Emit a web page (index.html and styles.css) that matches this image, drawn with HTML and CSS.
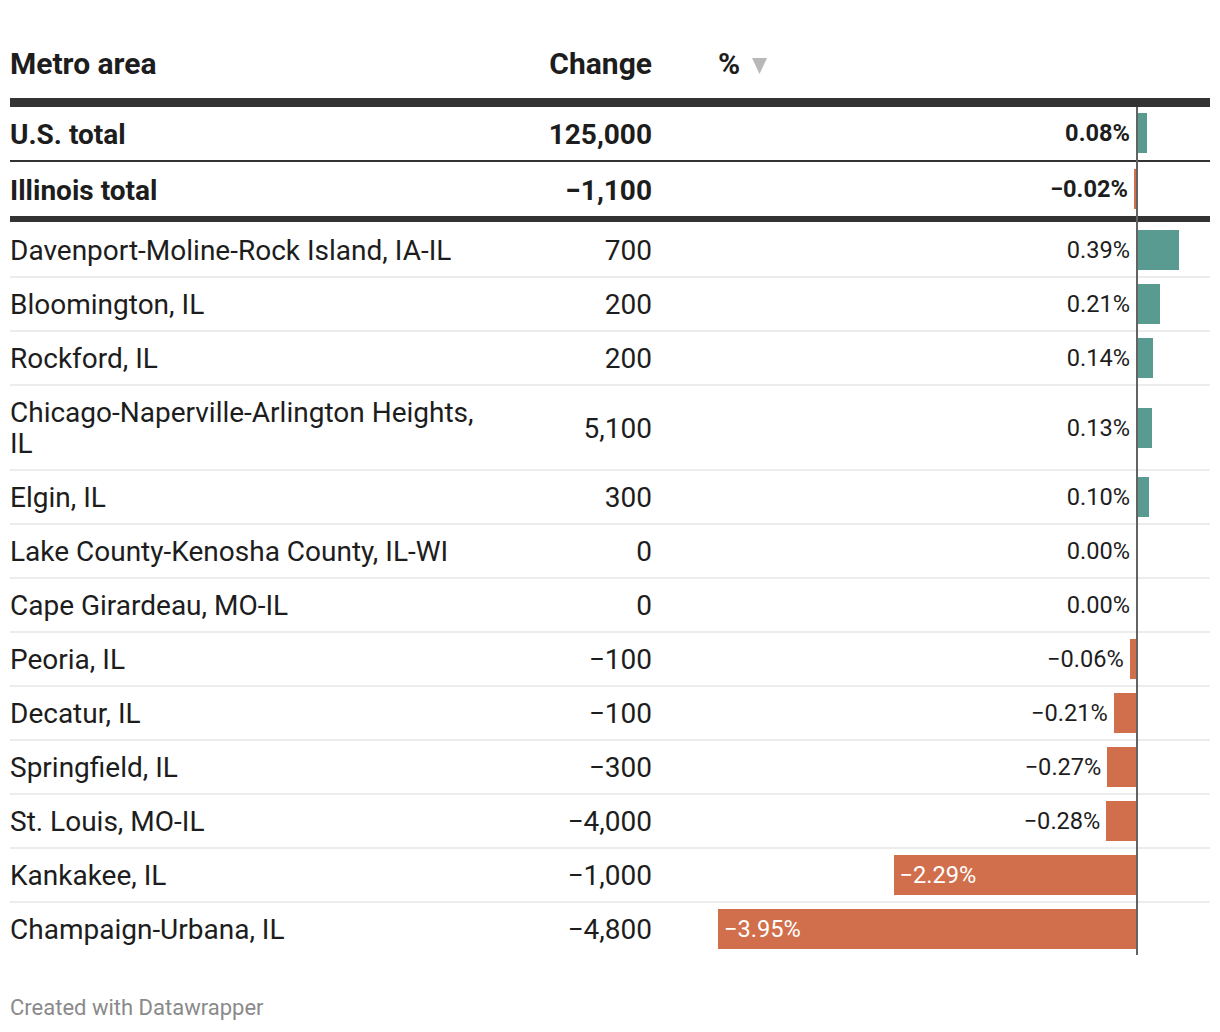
FILE: index.html
```html
<!DOCTYPE html>
<html lang="en">
<head>
<meta charset="utf-8">
<title>Metro area employment change</title>
<link rel="stylesheet" href="styles.css">
</head>
<body>
<div class="chart">
  <table class="tbl">
    <colgroup>
      <col class="col-name">
      <col class="col-num">
      <col class="col-bar">
    </colgroup>
    <thead>
      <tr>
        <th class="c-name">Metro area</th>
        <th class="c-num">Change</th>
        <th class="c-bar">%<svg class="sort" width="15" height="16" viewBox="0 0 15 16"><polygon points="0,0 15,0 7.5,16" fill="#b8b8b8"/></svg></th>
      </tr>
    </thead>
    <tbody>
      <tr class="us">
        <td class="c-name">U.S. total</td>
        <td class="c-num">125,000</td>
        <td class="c-bar"><div class="bars"><div class="neg"><span class="lbl">0.08%</span></div><div class="pos"><div class="bar up" style="width:8.5px"></div></div></div></td>
      </tr>
      <tr class="il">
        <td class="c-name">Illinois total</td>
        <td class="c-num">−1,100</td>
        <td class="c-bar"><div class="bars"><div class="neg"><span class="lbl">−0.02%</span><div class="bar down" style="width:2.1px"></div></div><div class="pos"></div></div></td>
      </tr>
      <tr class="first">
        <td class="c-name">Davenport-Moline-Rock Island, IA-IL</td>
        <td class="c-num">700</td>
        <td class="c-bar"><div class="bars"><div class="neg"><span class="lbl">0.39%</span></div><div class="pos"><div class="bar up" style="width:41.3px"></div></div></div></td>
      </tr>
      <tr>
        <td class="c-name">Bloomington, IL</td>
        <td class="c-num">200</td>
        <td class="c-bar"><div class="bars"><div class="neg"><span class="lbl">0.21%</span></div><div class="pos"><div class="bar up" style="width:22.2px"></div></div></div></td>
      </tr>
      <tr>
        <td class="c-name">Rockford, IL</td>
        <td class="c-num">200</td>
        <td class="c-bar"><div class="bars"><div class="neg"><span class="lbl">0.14%</span></div><div class="pos"><div class="bar up" style="width:14.8px"></div></div></div></td>
      </tr>
      <tr>
        <td class="c-name">Chicago-Naperville-Arlington Heights, IL</td>
        <td class="c-num">5,100</td>
        <td class="c-bar"><div class="bars"><div class="neg"><span class="lbl">0.13%</span></div><div class="pos"><div class="bar up" style="width:13.8px"></div></div></div></td>
      </tr>
      <tr>
        <td class="c-name">Elgin, IL</td>
        <td class="c-num">300</td>
        <td class="c-bar"><div class="bars"><div class="neg"><span class="lbl">0.10%</span></div><div class="pos"><div class="bar up" style="width:10.6px"></div></div></div></td>
      </tr>
      <tr>
        <td class="c-name">Lake County-Kenosha County, IL-WI</td>
        <td class="c-num">0</td>
        <td class="c-bar"><div class="bars"><div class="neg"><span class="lbl">0.00%</span></div><div class="pos"></div></div></td>
      </tr>
      <tr>
        <td class="c-name">Cape Girardeau, MO-IL</td>
        <td class="c-num">0</td>
        <td class="c-bar"><div class="bars"><div class="neg"><span class="lbl">0.00%</span></div><div class="pos"></div></div></td>
      </tr>
      <tr>
        <td class="c-name">Peoria, IL</td>
        <td class="c-num">−100</td>
        <td class="c-bar"><div class="bars"><div class="neg"><span class="lbl">−0.06%</span><div class="bar down" style="width:6.3px"></div></div><div class="pos"></div></div></td>
      </tr>
      <tr>
        <td class="c-name">Decatur, IL</td>
        <td class="c-num">−100</td>
        <td class="c-bar"><div class="bars"><div class="neg"><span class="lbl">−0.21%</span><div class="bar down" style="width:22.2px"></div></div><div class="pos"></div></div></td>
      </tr>
      <tr>
        <td class="c-name">Springfield, IL</td>
        <td class="c-num">−300</td>
        <td class="c-bar"><div class="bars"><div class="neg"><span class="lbl">−0.27%</span><div class="bar down" style="width:28.6px"></div></div><div class="pos"></div></div></td>
      </tr>
      <tr>
        <td class="c-name">St. Louis, MO-IL</td>
        <td class="c-num">−4,000</td>
        <td class="c-bar"><div class="bars"><div class="neg"><span class="lbl">−0.28%</span><div class="bar down" style="width:29.6px"></div></div><div class="pos"></div></div></td>
      </tr>
      <tr>
        <td class="c-name">Kankakee, IL</td>
        <td class="c-num">−1,000</td>
        <td class="c-bar"><div class="bars"><div class="neg"><div class="bar down inside" style="width:242.4px"><span class="lbl-in">−2.29%</span></div></div><div class="pos"></div></div></td>
      </tr>
      <tr>
        <td class="c-name">Champaign-Urbana, IL</td>
        <td class="c-num">−4,800</td>
        <td class="c-bar"><div class="bars"><div class="neg"><div class="bar down inside" style="width:418px"><span class="lbl-in">−3.95%</span></div></div><div class="pos"></div></div></td>
      </tr>
    </tbody>
  </table>
  <div class="axis"></div>
</div>
<footer class="credit">Created with Datawrapper</footer>
</body>
</html>
```

FILE: styles.css
```css
* { box-sizing: border-box; }

html, body {
  margin: 0;
  padding: 0;
  background: #ffffff;
}

body {
  font-family: Roboto, "Liberation Sans", Arial, sans-serif;
  color: #1d1d1d;
}

.chart {
  position: relative;
  margin: 0 10px;
}

.tbl {
  width: 1200px;
  table-layout: fixed;
  border-collapse: separate;
  border-spacing: 0;
}

.col-name { width: 480px; }
.col-num { width: 162px; }
.col-bar { width: 558px; }

.tbl th,
.tbl td {
  padding: 0;
  font-size: 28px;
  line-height: 31px;
  vertical-align: middle;
}

.tbl th {
  font-size: 30px;
  font-weight: 700;
  padding-top: 48px;
  padding-bottom: 19px;
  border-bottom: 9px solid #333333;
  text-align: left;
}

.tbl td {
  padding-top: 11px;
  padding-bottom: 10px;
  border-bottom: 2px solid #ececec;
}

.tbl td.c-bar {
  padding-top: 6px;
  padding-bottom: 6px;
}

.tbl th.c-num,
.tbl td.c-num {
  text-align: right;
}

.tbl th.c-bar,
.tbl td.c-bar {
  padding-left: 66px;
}

.sort {
  display: inline-block;
  margin-left: 12px;
}

.tbl tr.us td {
  font-weight: 700;
  padding-top: 12px;
  padding-bottom: 10px;
  border-bottom: 2px solid #333333;
}

.tbl tr.us td.c-bar {
  padding-top: 6px;
  padding-bottom: 7px;
}

.tbl tr.il td {
  font-weight: 700;
  padding-top: 13px;
  padding-bottom: 10px;
  border-bottom: 6px solid #333333;
}

.tbl tr.il td.c-bar {
  padding-top: 7px;
  padding-bottom: 7px;
}

.tbl tr.first td {
  padding-top: 13px;
  padding-bottom: 10px;
}

.tbl tr.first td.c-bar {
  padding-top: 8px;
  padding-bottom: 6px;
}

.tbl tbody tr:last-child td {
  border-bottom: none;
}

.bars {
  display: flex;
  gap: 2px;
  height: 40px;
}

.neg {
  width: 418px;
  flex: none;
  display: flex;
  justify-content: flex-end;
  align-items: center;
}

.pos {
  flex: 1;
  display: flex;
  align-items: center;
}

.bar {
  height: 40px;
  flex: none;
}

.bar.up { background: #5a9b91; }
.bar.down { background: #d16f4c; }

.lbl {
  font-size: 23.6px;
  line-height: 40px;
  margin-right: 6px;
  white-space: nowrap;
}

.bar.inside {
  display: flex;
  align-items: center;
  padding-left: 6px;
}

.lbl-in {
  color: #ffffff;
  font-size: 23.6px;
  line-height: 40px;
  white-space: nowrap;
}

.axis {
  position: absolute;
  top: 107px;
  bottom: 0;
  right: 72px;
  width: 2px;
  background: #636363;
}

.credit {
  margin: 40px 10px 0;
  font-size: 22px;
  line-height: 26px;
  color: #8a8a8a;
}
```
